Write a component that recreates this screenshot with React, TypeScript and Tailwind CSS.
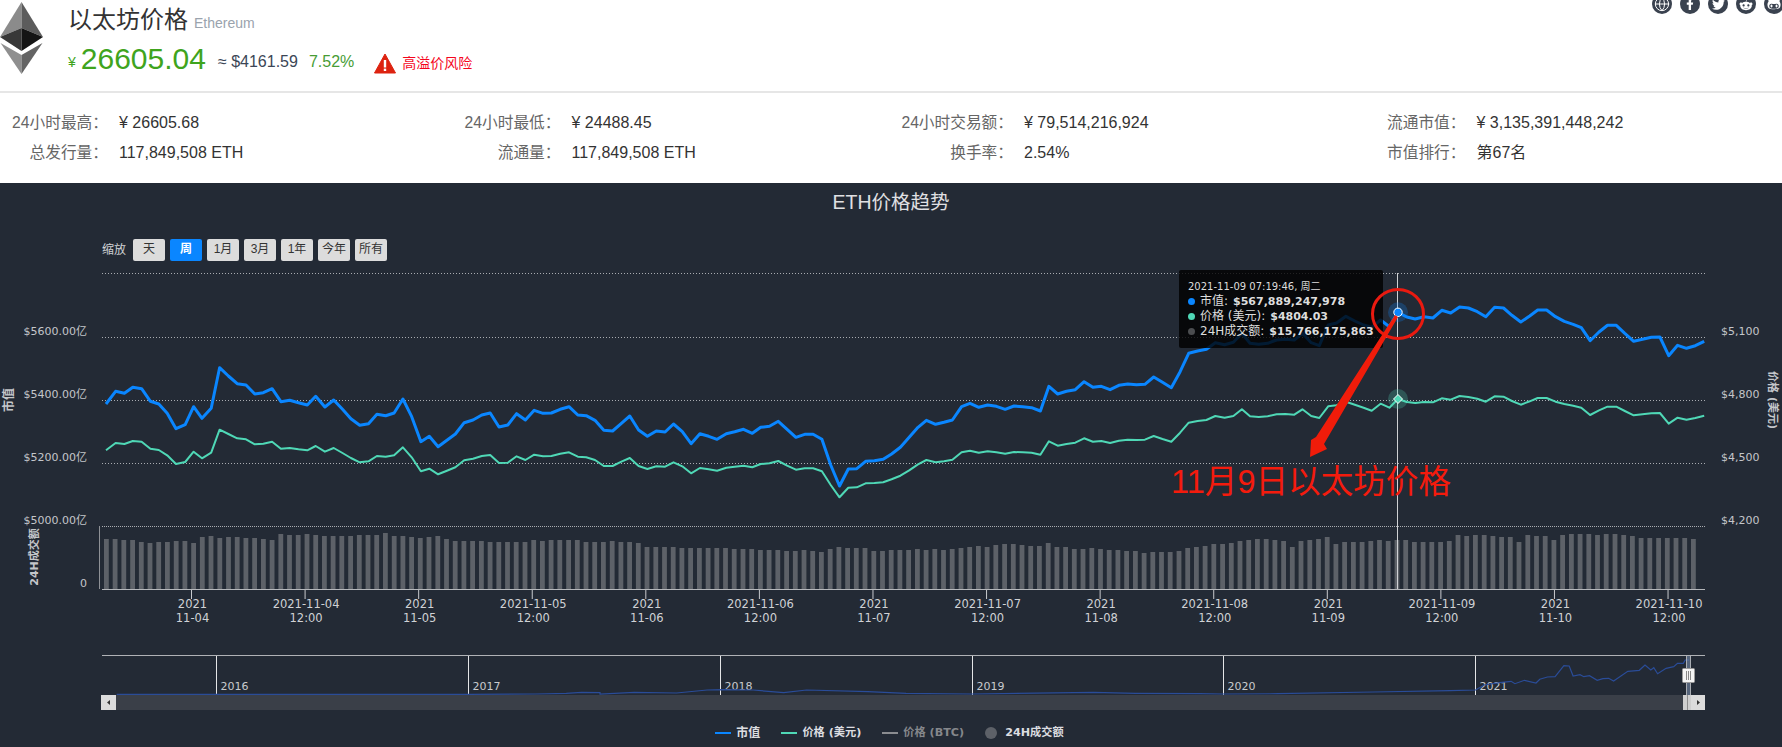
import { Globe } from "lucide-react"
import { FaFacebookF, FaGithubAlt, FaRedditAlien, FaTwitter } from "react-icons/fa"

const FONT_CHART = "[font-family:'DejaVu_Sans','Noto_Sans_CJK_SC',sans-serif]"

// measured from the reference: [x, y] pairs in zoomed crops, converted back to page pixels
type Raw = number[]
const conv = (raw: Raw, ox: number, oy: number, kx: number) => {
  const out: string[] = []
  for (let i = 0; i < raw.length; i += 2) {
    out.push(`${(ox + raw[i] * kx).toFixed(1)},${(oy + raw[i + 1] / 3).toFixed(1)}`)
  }
  return out.join(" ")
}
const K600 = 600 / 1568
const K632 = 632 / 1568

const blue = [
  conv([277,672,302,634,325,640,347,622,370,626,393,664,415,672,437,700,460,746,484,734,506,680,528,715,552,685,574,563,597,588,620,611,643,615,666,642,688,638,711,626,734,665,757,661,780,668,803,675,825,649,849,681,872,660,895,688,917,716,940,736,963,731,985,703,1008,707,1030,699,1053,657,1076,710,1100,785,1122,769,1145,800,1168,781,1190,762,1213,728,1236,720,1259,705,1281,699,1304,741,1327,735,1350,701,1373,720,1396,691,1419,700,1441,699,1464,688,1487,680,1510,705,1532,707,1555,721], 0, 180, K600),
  conv([10,541,33,543,56,520,78,498,101,540,124,559,147,543,170,546,192,522,215,545,238,581,261,551,284,559,306,568,330,551,352,545,375,538,398,550,420,532,443,529,466,514,489,538,512,562,535,553,557,553,580,568,603,645,626,708,649,657,671,656,694,634,717,632,740,628,762,612,785,592,808,562,831,532,853,511,877,523,899,517,921,510,945,470,967,460,990,472,1013,465,1036,469,1059,478,1082,468,1105,470,1128,473,1151,483,1173,409,1196,432,1219,424,1242,419,1265,395,1288,412,1310,409,1333,419,1356,406,1379,402,1402,404,1424,403,1447,381,1470,397,1493,413,1516,365], 600, 250, K600),
  conv([96,310,118,303,140,298,162,278,185,284,207,277,228,250,248,280,270,283,292,280,314,270,336,268,358,270,378,250,400,278,420,287,442,225,463,219,486,199,508,213,530,225,550,232,572,210,594,230,615,187,637,201,658,207,680,200,702,204,724,181,746,189,768,171,790,174,812,185,833,200,855,172,877,174,898,196,920,216,942,198,962,180,984,180,1006,200,1028,214,1050,223,1070,233,1092,272,1114,246,1135,226,1157,226,1178,250,1200,274,1222,268,1244,262,1265,261,1287,317,1309,286,1331,295,1353,287,1375,274], 1150, 250, K632),
].join(" ")

const teal = [
  conv([277,811,302,789,325,792,347,783,370,785,393,806,415,810,437,826,460,852,484,846,506,815,528,835,552,818,574,749,597,762,620,775,643,778,666,793,688,791,711,785,734,806,757,804,780,808,803,811,825,798,849,815,872,804,895,819,917,834,940,847,963,844,985,828,1008,830,1030,826,1053,802,1076,832,1100,874,1122,866,1145,883,1168,872,1190,862,1213,841,1236,836,1259,828,1281,825,1304,849,1327,848,1350,829,1373,840,1396,824,1419,829,1441,828,1464,821,1487,817,1510,830,1532,832,1555,840], 0, 180, K600),
  conv([10,648,33,648,56,635,78,624,101,648,124,657,147,649,170,650,192,637,215,649,238,670,261,654,284,658,306,662,330,653,352,650,375,647,398,652,420,642,443,640,466,633,489,647,512,659,535,655,557,655,580,664,603,705,626,742,649,713,671,712,694,700,717,699,740,697,762,688,785,677,808,661,831,643,853,630,877,637,899,634,921,629,945,607,967,602,990,608,1013,604,1036,607,1059,611,1082,606,1105,607,1128,608,1151,614,1173,574,1196,587,1219,582,1242,578,1265,565,1288,575,1310,573,1333,579,1356,572,1379,569,1402,570,1424,569,1447,558,1470,567,1493,575,1516,548], 600, 250, K600),
  conv([96,518,118,513,140,510,162,498,185,503,207,498,228,478,248,499,270,501,292,499,314,493,336,492,358,494,378,478,400,498,420,504,442,469,463,466,486,455,508,464,530,473,550,482,572,461,594,473,615,447,637,456,658,459,680,456,702,457,724,445,746,449,768,438,790,441,812,446,833,455,855,439,877,440,898,453,920,464,942,454,962,444,984,444,1006,455,1028,462,1050,467,1070,473,1092,495,1114,481,1135,470,1157,470,1178,483,1200,496,1222,493,1244,490,1265,489,1287,521,1309,503,1331,509,1353,504,1375,497], 1150, 250, K632),
].join(" ")

const nav = [
  conv([305,583,1224,583,1400,582,1480,580,1520,577,1568,578], 0, 500, K600),
  conv([0,162,90,157,200,159,280,150,320,149,400,150,480,158,540,150,700,155,800,160,971,162,1290,157,1400,160,1568,161], 600, 640, K600),
  conv([108,582,250,581,500,576,700,572,767,570,790,555,830,548,860,544,870,551,895,541,925,549,935,538,955,531,975,530,998,497,1012,498,1022,528,1040,524,1050,530,1065,527,1085,541,1100,536,1115,535,1128,543,1165,514,1195,511,1210,495,1225,510,1233,503,1243,521,1265,505,1285,500,1295,490,1310,490,1315,480,1325,480], 1182, 500, K600),
].join(" ")

const bars = [
  50,50,49,49,47,46,47,47,48,48,46,52,53,51,52,52,51,51,50,49,55,54,54,55,54,53,53,53,53,54,54,54,56,53,53,52,51,52,53,50,48,48,48,48,47,47,47,47,47,49,48,49,
  49,49,49,47,47,47,48,47,47,46,42,42,42,42,41,41,41,41,41,41,40,40,40,39,39,39,38,38,39,38,37,40,42,41,41,41,38,38,39,39,39,40,39,40,39,40,
  41,42,43,42,44,45,45,44,43,43,46,42,42,40,40,41,40,39,39,38,38,36,37,37,37,38,41,42,43,45,45,46,48,49,50,50,49,48,42,48,49,50,52,45,47,47,
  47,48,49,48,49,49,47,47,47,47,48,54,53,54,54,53,52,52,47,54,53,53,49,54,55,55,55,54,55,55,54,53,51,51,51,51,51,51,50,
]

const gridY = [273, 337, 400, 463]
const leftLabels = [
  { y: 335, t: "$5600.00亿" },
  { y: 398, t: "$5400.00亿" },
  { y: 461, t: "$5200.00亿" },
  { y: 524, t: "$5000.00亿" },
  { y: 587, t: "0" },
]
const rightLabels = [
  { y: 335, t: "$5,100" },
  { y: 398, t: "$4,800" },
  { y: 461, t: "$4,500" },
  { y: 524, t: "$4,200" },
]
const ticks = [
  ["2021", "11-04"], ["2021-11-04", "12:00"], ["2021", "11-05"], ["2021-11-05", "12:00"],
  ["2021", "11-06"], ["2021-11-06", "12:00"], ["2021", "11-07"], ["2021-11-07", "12:00"],
  ["2021", "11-08"], ["2021-11-08", "12:00"], ["2021", "11-09"], ["2021-11-09", "12:00"],
  ["2021", "11-10"], ["2021-11-10", "12:00"],
]
const years = [
  { x: 216, t: "2016" },
  { x: 468, t: "2017" },
  { x: 720, t: "2018" },
  { x: 972, t: "2019" },
  { x: 1223, t: "2020" },
  { x: 1475, t: "2021" },
]
const ranges = ["天", "周", "1月", "3月", "1年", "今年", "所有"]

const stats = [
  [
    ["24小时最高：", "¥ 26605.68"],
    ["24小时最低：", "¥ 24488.45"],
    ["24小时交易额：", "¥ 79,514,216,924"],
    ["流通市值：", "¥ 3,135,391,448,242"],
  ],
  [
    ["总发行量：", "117,849,508 ETH"],
    ["流通量：", "117,849,508 ETH"],
    ["换手率：", "2.54%"],
    ["市值排行：", "第67名"],
  ],
]

function EthLogo() {
  return (
    <svg width="44" height="76" viewBox="0 0 44 76">
      <polygon points="21.5,2 0,37 21.5,28" fill="#8b8b8b" />
      <polygon points="21.5,2 43,37 21.5,28" fill="#5c5c5c" />
      <polygon points="0,37 21.5,28 21.5,51" fill="#383838" />
      <polygon points="43,37 21.5,28 21.5,51" fill="#141414" />
      <polygon points="0.5,43 21.5,55 21.5,74" fill="#8f8f8f" />
      <polygon points="42.5,43 21.5,55 21.5,74" fill="#646464" />
    </svg>
  )
}

function Warning() {
  return (
    <svg width="22" height="21" viewBox="0 0 22 21">
      <path d="M11 1 L21.5 20 L0.5 20 Z" fill="#dd2310" stroke="#dd2310" strokeLinejoin="round" />
      <rect x="9.8" y="7" width="2.4" height="7.5" fill="#fff" />
      <rect x="9.8" y="15.6" width="2.4" height="2.4" fill="#fff" />
    </svg>
  )
}

function Social() {
  const cls = "flex h-5 w-5 shrink-0 items-center justify-center rounded-full bg-[#3a424f] text-white"
  return (
    <div className="absolute left-[1652px] top-[-6px] flex gap-[8px]">
      <span className={cls}><Globe size={16} strokeWidth={1.5} /></span>
      <span className={cls}><FaFacebookF size={12} /></span>
      <span className={cls}><FaTwitter size={13} /></span>
      <span className={cls}><FaRedditAlien size={14} /></span>
      <span className={cls}><FaGithubAlt size={14} /></span>
    </div>
  )
}

function Header() {
  return (
    <header className="relative h-[183px] bg-white">
      <Social />
      <div className="flex h-[93px] border-b-2 border-[#e6e6e6]">
        <div className="w-[68px] shrink-0">
          <EthLogo />
        </div>
        <div>
          <div className="flex h-[40px] items-center">
            <h1 className="text-[24px] leading-[40px] text-[#333]">以太坊价格</h1>
            <span className="ml-[6px] mt-[6px] text-[14px] text-[#9aa3ad]">Ethereum</span>
          </div>
          <div className="flex h-[38px] items-center">
            <span className="mt-[7px] text-[14px] text-[#3fa41d]">¥</span>
            <span className="ml-[5px] text-[30px] leading-[36px] text-[#3fa41d]">26605.04</span>
            <span className="ml-[12px] mt-[6px] text-[16px] text-[#3b4656]">≈ $4161.59</span>
            <span className="ml-[11px] mt-[6px] text-[16px] text-[#479c35]">7.52%</span>
            <span className="ml-[20px] mt-[9px]"><Warning /></span>
            <span className="ml-[6px] mt-[8px] text-[14px] text-[#f5051c]">高溢价风险</span>
          </div>
        </div>
      </div>
      <div className="pt-[15px]">
        {stats.map((row, r) => (
          <div key={r} className="grid h-[30px] grid-cols-[repeat(4,452.5px)] items-center">
            {row.map(([label, value]) => (
              <div key={label} className="flex items-center">
                <span className="flex w-[108px] shrink-0 justify-end whitespace-nowrap text-[15.7px] text-[#666]">{label}</span>
                <span className="ml-[11px] whitespace-nowrap text-[16px] text-[#333]">{value}</span>
              </div>
            ))}
          </div>
        ))}
      </div>
    </header>
  )
}

function Plot() {
  return (
    <svg width="1782" height="451" viewBox="0 265 1782 451" className={`block ${FONT_CHART}`}>
      {gridY.map((y) => (
        <line key={y} x1="102" x2="1705" y1={y + 0.5} y2={y + 0.5} stroke="#a9acb1" strokeDasharray="1 2" />
      ))}
      <line x1="102" x2="1705" y1="526.5" y2="526.5" stroke="#a9acb1" strokeDasharray="1 1" />

      {bars.map((h, i) => (
        <rect key={i} x={(104 + i * 8.72).toFixed(1)} y={589 - h} width="4.8" height={h} fill="#5d6168" />
      ))}
      <line x1="99.5" x2="99.5" y1="526" y2="589" stroke="#8e9196" />
      <line x1="102" x2="1705" y1="589.5" y2="589.5" stroke="#b4b6ba" />
      {ticks.map(([a, b], i) => {
        const x = 191.5 + i * 113.58
        return (
          <g key={i} textAnchor="middle" fill="#d0d2d5" fontSize="11.5">
            <line x1={x} x2={x} y1="590" y2="599" stroke="#c8cace" />
            <text x={x + 1} y="608">{a}</text>
            <text x={x + 1} y="622">{b}</text>
          </g>
        )
      })}

      {leftLabels.map((l) => (
        <text key={l.t} x="87" y={l.y} textAnchor="end" fontSize="11" fill="#c4c6ca">{l.t}</text>
      ))}
      {rightLabels.map((l) => (
        <text key={l.t} x="1721" y={l.y} fontSize="11" fill="#c4c6ca">{l.t}</text>
      ))}
      <text transform="translate(13 400) rotate(-90)" textAnchor="middle" fontSize="12" fontWeight="700" fill="#c4c6ca">市值</text>
      <text transform="translate(38 557) rotate(-90)" textAnchor="middle" fontSize="11" fontWeight="700" fill="#c4c6ca">24H成交额</text>
      <text transform="translate(1769 400) rotate(90)" textAnchor="middle" fontSize="11" fontWeight="700" fill="#c4c6ca">价格 (美元)</text>

      <polyline points={teal} fill="none" stroke="#4fd8b6" strokeWidth="2" strokeLinejoin="round" />
      <polyline points={blue} fill="none" stroke="#0a86ff" strokeWidth="3" strokeLinejoin="round" />

      <line x1="1397.5" x2="1397.5" y1="273" y2="589" stroke="#cfd1d4" />
      <circle cx="1398" cy="312.3" r="10" fill="#0a86ff" opacity="0.25" />
      <circle cx="1398" cy="312.3" r="4.2" fill="#0a86ff" stroke="#fff" />
      <circle cx="1398" cy="399" r="10" fill="#4fd8b6" opacity="0.25" />
      <polygon points="1398,394.5 1402.5,399 1398,403.5 1393.5,399" fill="#4fd8b6" stroke="#fff" />

      {/* navigator */}
      <line x1="102" x2="1705" y1="655.5" y2="655.5" stroke="#b0b2b6" />
      {years.map((y) => (
        <g key={y.t}>
          <line x1={y.x + 0.5} x2={y.x + 0.5} y1="656" y2="695" stroke="#e4e5e7" />
          <text x={y.x + 4.5} y="690" fontSize="11" fill="#c9cbce">{y.t}</text>
        </g>
      ))}
      <polyline points={nav} fill="none" stroke="#2a4c98" strokeWidth="1.2" />
      <rect x="1687" y="656" width="3.5" height="39" fill="#7f93b4" opacity="0.55" />
      <line x1="1686.5" x2="1686.5" y1="656" y2="695" stroke="#a9adb3" />
      <line x1="1690.5" x2="1690.5" y1="656" y2="695" stroke="#a9adb3" />
      <rect x="1682.5" y="668.5" width="12" height="14" rx="1" fill="#f4f4f4" stroke="#9a9a9a" />
      <line x1="1686.5" x2="1686.5" y1="671" y2="680" stroke="#888" />
      <line x1="1688.5" x2="1688.5" y1="671" y2="680" stroke="#888" />
      <line x1="1690.5" x2="1690.5" y1="671" y2="680" stroke="#888" />

      {/* scrollbar */}
      <rect x="101" y="695" width="1604" height="15" fill="#3a3f48" />
      <rect x="101" y="695" width="15" height="15" fill="#dcdcdc" />
      <polygon points="107,702.5 110,700 110,705" fill="#333" />
      <rect x="1683" y="695" width="8" height="15" fill="#cfcfcf" />
      <line x1="1687.5" x2="1687.5" y1="695" y2="710" stroke="#8d8d8d" />
      <rect x="1691" y="695" width="14" height="15" fill="#dcdcdc" />
      <polygon points="1700,702.5 1697,700 1697,705" fill="#333" />
    </svg>
  )
}

function Tooltip() {
  const rows = [
    { dot: "bg-[#0a86ff]", name: "市值:", value: "$567,889,247,978" },
    { dot: "bg-[#4fd8b6]", name: "价格 (美元):", value: "$4804.03" },
    { dot: "bg-[#4b4d50]", name: "24H成交额:", value: "$15,766,175,863" },
  ]
  return (
    <div className={`absolute left-[1179px] top-[5px] h-[78px] w-[204px] rounded-[2px] bg-black/80 pl-[9px] pt-[10px] text-[#ddd] ${FONT_CHART}`}>
      <div className="h-[14px] whitespace-nowrap text-[10px] leading-[14px]">2021-11-09 07:19:46, 周二</div>
      {rows.map((r) => (
        <div key={r.name} className="flex h-[15px] items-center whitespace-nowrap text-[12px] leading-[15px]">
          <span className={`h-[7px] w-[7px] rounded-full ${r.dot}`} />
          <span className="ml-[5px]">{r.name}</span>
          <b className="ml-[5px] text-[11px] font-bold">{r.value}</b>
        </div>
      ))}
    </div>
  )
}

function Annotation() {
  return (
    <>
      <svg width="1782" height="451" viewBox="0 265 1782 451" className="pointer-events-none absolute left-0 top-0">
        <ellipse cx="1398" cy="314" rx="25.5" ry="24.5" fill="none" stroke="#ea1a10" strokeWidth="3" />
        <polygon points="1310,457 1311,440 1316,437 1395,315 1398,317 1324,444 1327,449" fill="#f01c0a" />
      </svg>
      <div className="absolute left-[1171px] top-[197px] whitespace-nowrap text-[32.6px] leading-[40px] text-[#f41b0d]">
        11月9日以太坊价格
      </div>
    </>
  )
}

function Chart() {
  return (
    <section className="h-[564px] bg-[#232a35]">
      <h2 className="h-[36px] pt-[1px] text-center text-[19.5px] leading-[36px] text-[#e0e0e3]">ETH价格趋势</h2>
      <div className="mt-[20px] flex h-[22px] items-center pl-[102px] text-[12px]">
        <span className="mr-[7px] w-[24px] text-[#cfd1d4]">缩放</span>
        <div className="flex gap-[5px]">
          {ranges.map((r) => (
            <button
              key={r}
              className={
                r === "周"
                  ? "h-[22px] w-[32px] rounded-[2px] bg-[#0a86ff] pb-[2px] font-bold text-white"
                  : "h-[22px] w-[32px] rounded-[2px] bg-[#dcdcdc] pb-[2px] text-[#333]"
              }
            >
              {r}
            </button>
          ))}
        </div>
      </div>
      <div className="relative mt-[4px] h-[451px]">
        <Plot />
        <Tooltip />
        <Annotation />
      </div>
      <div className={`flex h-[31px] items-center justify-center gap-[21px] pr-[3px] pt-[3px] text-[11.2px] font-bold text-[#dcdde0] ${FONT_CHART}`}>
        <span className="flex items-center gap-[5px]"><i className="h-[2px] w-[16px] bg-[#0a86ff]" /><span className="text-[12px]">市值</span></span>
        <span className="flex items-center gap-[5px]"><i className="h-[2px] w-[16px] bg-[#4fd8b6]" />价格 (美元)</span>
        <span className="flex items-center gap-[5px] text-[#85878b]"><i className="h-[2px] w-[16px] bg-[#8a8c90]" />价格 (BTC)</span>
        <span className="flex items-center gap-[8px]"><i className="h-[12px] w-[12px] rounded-full bg-[#5d6168]" />24H成交额</span>
      </div>
    </section>
  )
}

export default function App() {
  return (
    <div className="h-[747px] w-[1782px] overflow-hidden bg-white font-['Liberation_Sans','Noto_Sans_CJK_SC',sans-serif]">
      <Header />
      <Chart />
    </div>
  )
}
